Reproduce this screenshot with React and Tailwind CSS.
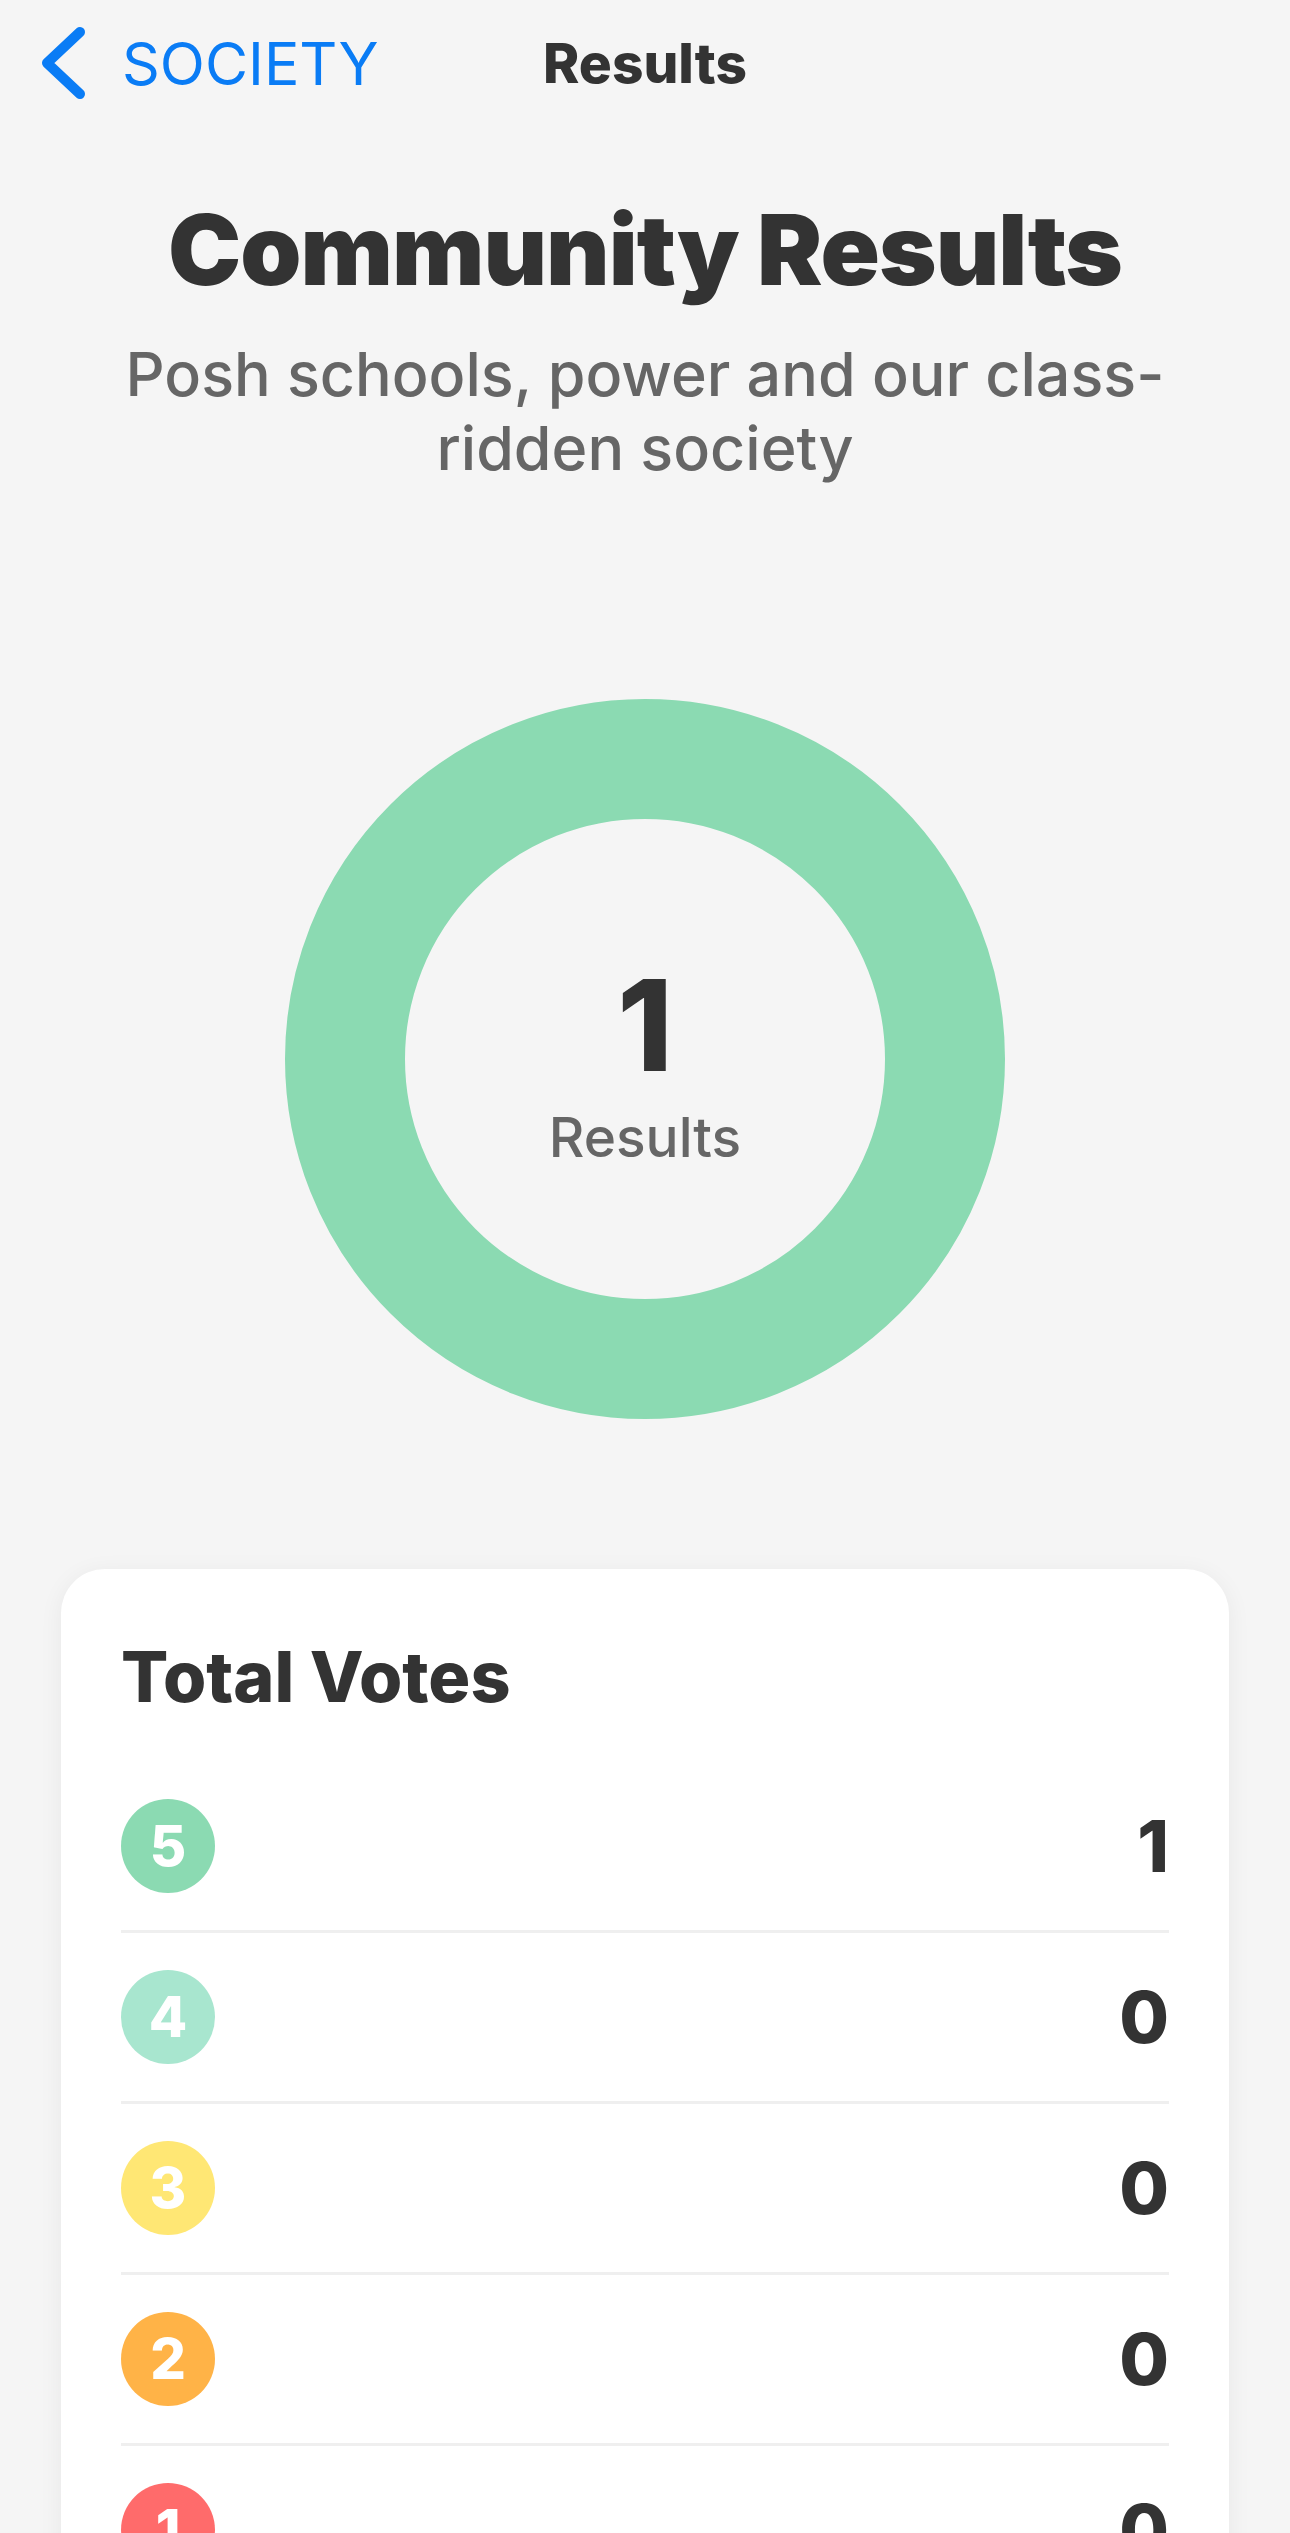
import React from 'react';

// Vote breakdown rows
const VOTES = [
  { score: 5, count: 1, color: 'bg-[#8bdab2]' },
  { score: 4, count: 0, color: 'bg-[#a8e6cf]' },
  { score: 3, count: 0, color: 'bg-[#ffe774]' },
  { score: 2, count: 0, color: 'bg-[#ffb347]' },
  { score: 1, count: 0, color: 'bg-[#ff6b6b]' },
];

function Donut() {
  return (
    <div className="relative w-[720px] h-[720px]">
      <svg viewBox="0 0 720 720" className="w-full h-full">
        <circle cx="360" cy="360" r="300" fill="none" stroke="#8bdab2" strokeWidth="120" />
      </svg>
      <div className="absolute inset-0 flex flex-col items-center justify-center">
        <span className="text-[126px] leading-none font-extrabold text-[#333] mt-[10px]">1</span>
        <span className="text-[55px] leading-none font-medium text-[#666] mt-[22px]">Results</span>
      </div>
    </div>
  );
}

export default function App() {
  return (
    <div className="min-h-screen bg-[#f5f5f5] font-['Inter','Noto_Sans',sans-serif] text-[#333]">
      {/* Nav bar */}
      <header className="grid grid-cols-[1fr_auto_1fr] items-center h-[126px] px-[40px]">
        <button className="flex items-center gap-[36px] text-[#0a7cf5]">
          <svg width="46" height="72" viewBox="0 0 46 72" fill="none">
            <path d="M40 5 L7 36 L40 67" stroke="#0a7cf5" strokeWidth="10" strokeLinecap="round" strokeLinejoin="round" />
          </svg>
          <span className="text-[59px] leading-none font-normal">SOCIETY</span>
        </button>
        <h1 className="text-[55px] font-extrabold leading-none">Results</h1>
        <div />
      </header>

      {/* Title */}
      <section className="flex flex-col items-center text-center px-[100px] pt-[68px]">
        <h2 className="text-[98px] leading-[1.15] font-black tracking-[-1px]">Community Results</h2>
        <p className="mt-[30px] text-[61px] leading-[74px] font-medium text-[#666]">
          Posh schools, power and our class-ridden society
        </p>
      </section>

      {/* Donut chart */}
      <div className="flex justify-center mt-[214px]">
        <Donut />
      </div>

      {/* Total votes card */}
      <div className="mx-[61px] mt-[150px] bg-white rounded-[44px] shadow-[0_4px_24px_rgba(0,0,0,0.06)] px-[60px] pt-[73px]">
        <h3 className="text-[70px] font-extrabold leading-none">Total Votes</h3>
        <ul className="mt-[50px]">
          {VOTES.map(v => (
            <li key={v.score} className="flex items-center justify-between h-[171px] border-b-[3px] border-[#efefef]">
              <span className={`w-[94px] h-[94px] rounded-full ${v.color} flex items-center justify-center text-white text-[56px] font-extrabold`}>
                {v.score}
              </span>
              <span className="text-[72px] font-extrabold leading-none">{v.count}</span>
            </li>
          ))}
        </ul>
      </div>
    </div>
  );
}
